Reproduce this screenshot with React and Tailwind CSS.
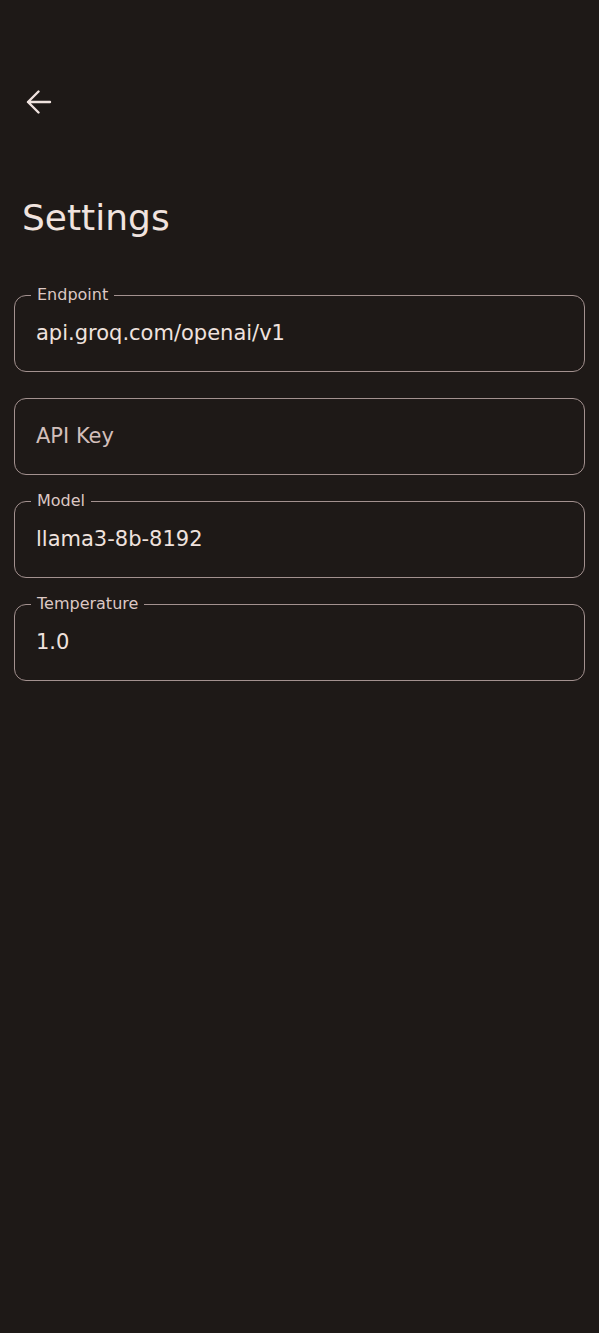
import React from "react";

const fields = [
  { label: "Endpoint", value: "api.groq.com/openai/v1" },
  { label: null, placeholder: "API Key" },
  { label: "Model", value: "llama3-8b-8192" },
  { label: "Temperature", value: "1.0" },
];

// Outlined text field with a notched border (legend sits in the top line)
const Field = ({ label, value, placeholder }) => (
  <div className="relative h-[77px] flex items-center px-[22px]">
    <fieldset
      className={
        label
          ? "absolute inset-x-0 bottom-0 top-[-9px] rounded-[12px] border-[1.5px] border-[#a3918f] px-[16px] pointer-events-none"
          : "absolute inset-0 rounded-[12px] border-[1.5px] border-[#a3918f] px-[16px] pointer-events-none"
      }
    >
      {label && (
        <legend className="px-[6px] text-[16px] leading-[18px] text-[#dcc8c4]">
          {label}
        </legend>
      )}
    </fieldset>
    {value ? (
      <span className="relative text-[21px] text-[#efe2de]">{value}</span>
    ) : (
      <span className="relative text-[21px] text-[#d2bfbb]">{placeholder}</span>
    )}
  </div>
);

export default function App() {
  return (
    <div
      className="min-h-[1333px] w-full bg-[#1e1917] text-[#efe2de]"
      style={{ fontFamily: '"DejaVu Sans", sans-serif' }}
    >
      {/* Top bar */}
      <div className="h-[70px]" />
      <div className="h-[64px] flex items-center pl-[26px]">
        <button className="w-[26px] h-[26px] flex items-center justify-center">
          <svg width="26" height="24" viewBox="0 0 26 24" fill="none">
            <path
              d="M24 12H2M12.5 1.5L2 12l10.5 10.5"
              stroke="#efe2de"
              strokeWidth="2.4"
              strokeLinecap="round"
              strokeLinejoin="round"
            />
          </svg>
        </button>
      </div>

      {/* Title */}
      <h1 className="pl-[22px] pt-[60px] text-[36px] leading-[48px] text-[#f0e3df]">
        Settings
      </h1>

      {/* Form */}
      <div className="px-[14px] pt-[53px] flex flex-col gap-[26px]">
        {fields.map((f, i) => (
          <Field key={i} {...f} />
        ))}
      </div>
    </div>
  );
}
